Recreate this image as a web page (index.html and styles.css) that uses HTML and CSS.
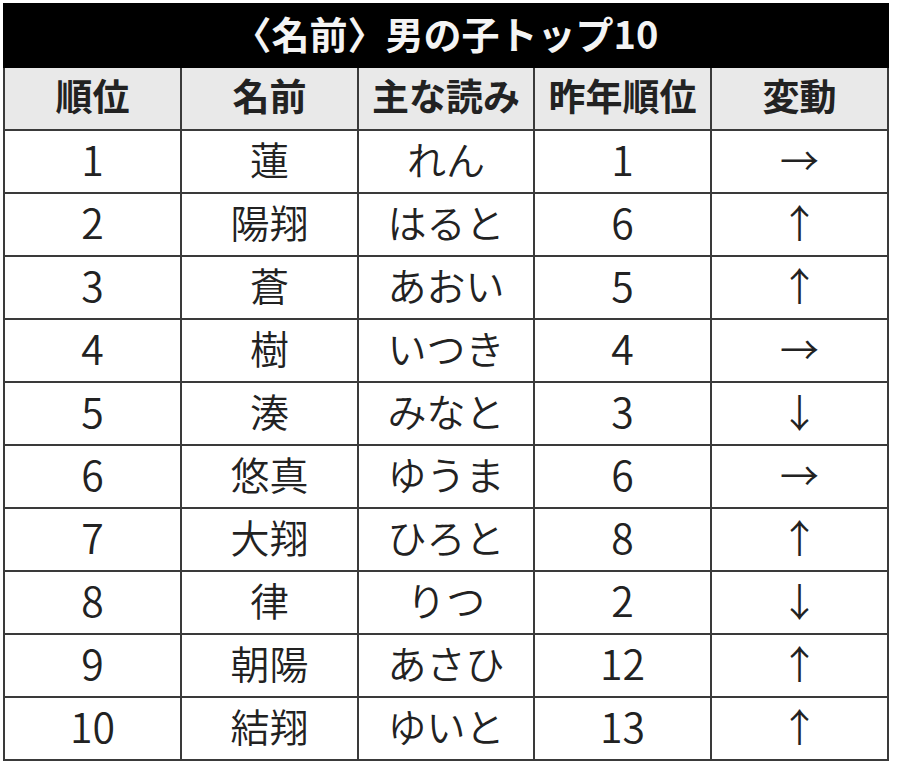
FILE: index.html
```html
<!DOCTYPE html>
<html lang="ja">
<head>
<meta charset="utf-8">
<link rel="stylesheet" href="styles.css">
</head>
<body>
<table class="rank">
  <colgroup>
    <col class="c1"><col class="c2"><col class="c3"><col class="c4"><col class="c5">
  </colgroup>
  <thead>
    <tr class="title"><th colspan="5">〈名前〉男の子トップ10</th></tr>
    <tr class="head"><th>順位</th><th>名前</th><th>主な読み</th><th>昨年順位</th><th>変動</th></tr>
  </thead>
  <tbody>
    <tr><td class="num">1</td><td>蓮</td><td>れん</td><td class="num">1</td><td>→</td></tr>
    <tr><td class="num">2</td><td>陽翔</td><td>はると</td><td class="num">6</td><td>↑</td></tr>
    <tr><td class="num">3</td><td>蒼</td><td>あおい</td><td class="num">5</td><td>↑</td></tr>
    <tr><td class="num">4</td><td>樹</td><td>いつき</td><td class="num">4</td><td>→</td></tr>
    <tr><td class="num">5</td><td>湊</td><td>みなと</td><td class="num">3</td><td>↓</td></tr>
    <tr><td class="num">6</td><td>悠真</td><td>ゆうま</td><td class="num">6</td><td>→</td></tr>
    <tr><td class="num">7</td><td>大翔</td><td>ひろと</td><td class="num">8</td><td>↑</td></tr>
    <tr><td class="num">8</td><td>律</td><td>りつ</td><td class="num">2</td><td>↓</td></tr>
    <tr><td class="num">9</td><td>朝陽</td><td>あさひ</td><td class="num">12</td><td>↑</td></tr>
    <tr><td class="num">10</td><td>結翔</td><td>ゆいと</td><td class="num">13</td><td>↑</td></tr>
  </tbody>
</table>
</body>
</html>
```
FILE: styles.css
```css
html, body {
  margin: 0;
  padding: 0;
  background: #ffffff;
}
body {
  padding: 3px 0 0 3px;
  font-family: "Noto Sans CJK JP", "Noto Sans", sans-serif;
  color: #222;
}
.rank {
  table-layout: fixed;
  width: 885px;
  border-collapse: collapse;
  border: 2px solid #3a3a3a;
}
.c1 { width: 177px; }
.c2 { width: 177px; }
.c3 { width: 176px; }
.c4 { width: 177px; }
.c5 { width: 177px; }
.rank th, .rank td {
  border: 2px solid #3a3a3a;
  text-align: center;
  vertical-align: middle;
  padding: 0 0 6px 0;
  height: 55px;
  line-height: 1;
}
.title th {
  background: #000;
  color: #f4f4f4;
  font-size: 38px;
  font-weight: 700;
  border-color: #000;
}
.head th {
  background: #e9e9e9;
  color: #222;
  font-size: 37px;
  font-weight: 700;
}
.rank td {
  font-size: 39px;
  font-weight: 350;
  color: #222;
}
.rank td.num {
  font-size: 41px;
}
```
